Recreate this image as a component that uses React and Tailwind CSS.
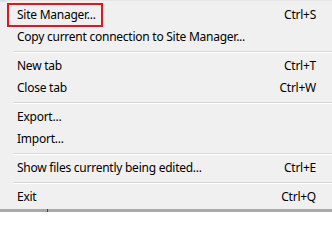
import React from 'react';

const items = [
  { label: 'Site Manager...', key: 'Ctrl+S', boxed: true },
  { label: 'Copy current connection to Site Manager...' },
  { sep: true },
  { label: 'New tab', key: 'Ctrl+T' },
  { label: 'Close tab', key: 'Ctrl+W' },
  { sep: true },
  { label: 'Export...' },
  { label: 'Import...' },
  { sep: true },
  { label: 'Show files currently being edited...', key: 'Ctrl+E' },
  { sep: true },
  { label: 'Exit', key: 'Ctrl+Q' },
];

const App = () => {
  return (
    <div
      className="w-[332px] h-[212px] bg-[#f0f0f0] text-black text-[12px] tracking-[-0.25px] relative overflow-hidden flex flex-col"
      style={{ fontFamily: '"Segoe UI", "Noto Sans", Lato, sans-serif' }}
    >
      {/* thin top edge */}
      <div className="h-px bg-[#e6e6e6] shrink-0" />
      <div className="absolute left-0 top-0 w-[6px] h-[2px] bg-[#cfe3f5]" />

      <div className="pt-[3px] flex flex-col">
        {items.map((it, i) =>
          it.sep ? (
            <div key={i} className="h-[7px] pl-[13px] flex flex-col justify-center">
              <div className="h-px bg-[#d7d7d7]" />
              <div className="h-px bg-white" />
            </div>
          ) : (
            <div key={i} className="h-[22px] flex items-center justify-between pl-[17px] pr-[16px] relative">
              {it.boxed && (
                <div className="absolute left-[7px] top-[-1px] w-[96px] h-[24px] border-2 border-[#e3161f]" />
              )}
              <span className="leading-none">{it.label}</span>
              {it.key && <span className="leading-none">{it.key}</span>}
            </div>
          )
        )}
      </div>

      {/* window edge below the menu */}
      <div className="absolute left-0 right-0 bottom-0 h-[3px] bg-[#a9a9a9]">
        <div className="absolute left-[47px] top-0 w-px h-[3px] bg-[#444]" />
      </div>
    </div>
  );
};

export default App;
